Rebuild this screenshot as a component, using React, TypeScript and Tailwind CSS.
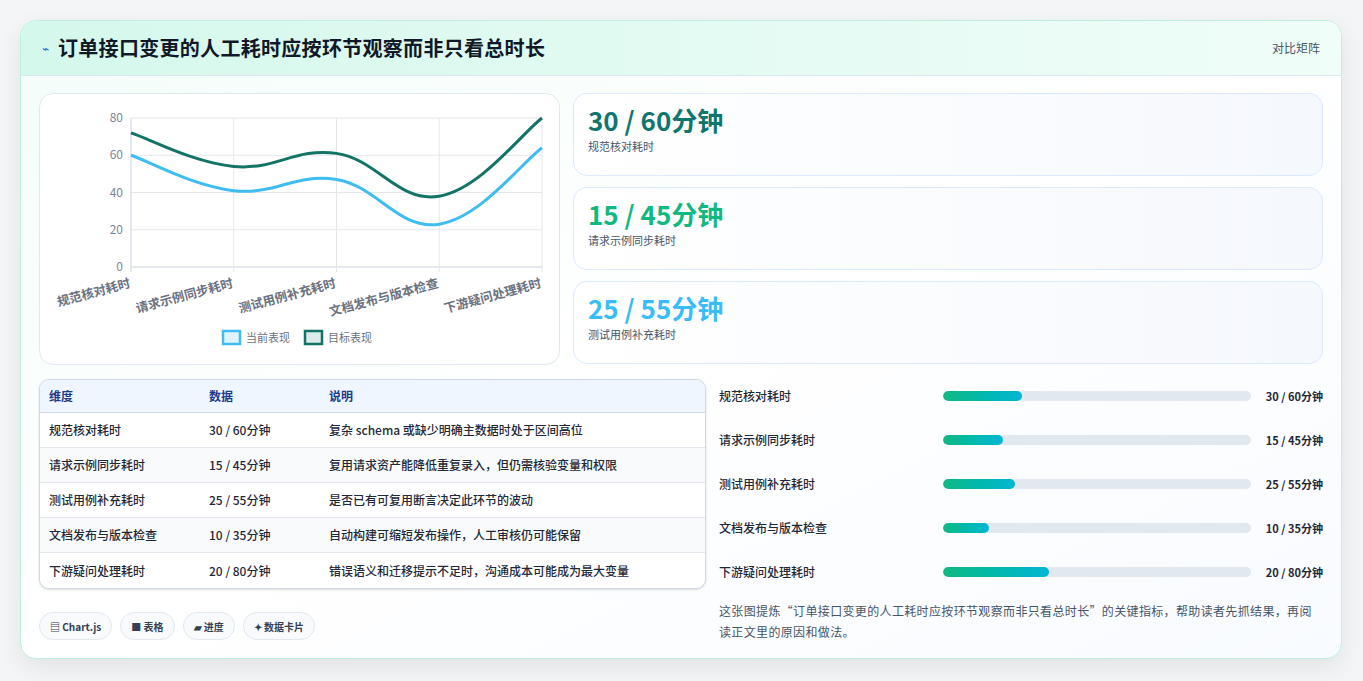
import React from "react";

const F = { fontFamily: '"Noto Sans CJK SC","Noto Sans",sans-serif' };
const labels = ["规范核对耗时", "请求示例同步耗时", "测试用例补充耗时", "文档发布与版本检查", "下游疑问处理耗时"];
const cur = [60, 41, 47, 23, 64];
const tgt = [72, 54, 61, 38, 80];
const X0 = 130, X1 = 541, Y0 = 264, Y1 = 115;
const xs = labels.map((_, i) => X0 + ((X1 - X0) * i) / 4);
const yv = (v: number) => Y0 - ((Y0 - Y1) * v) / 80;

function path(d: number[]) {
  const p = d.map((v, i) => [xs[i] - 39, yv(v) - 93]);
  let s = `M${p[0][0]},${p[0][1]}`;
  const t = 0.4;
  for (let i = 0; i < p.length - 1; i++) {
    const p0 = p[i - 1] || p[i], p1 = p[i], p2 = p[i + 1], p3 = p[i + 2] || p2;
    const c1 = [p1[0] + (p2[0] - p0[0]) * t / 2, p1[1] + (p2[1] - p0[1]) * t / 2];
    const c2 = [p2[0] - (p3[0] - p1[0]) * t / 2, p2[1] - (p3[1] - p1[1]) * t / 2];
    s += ` C${c1[0]},${c1[1]} ${c2[0]},${c2[1]} ${p2[0]},${p2[1]}`;
  }
  return s;
}

function Chart() {
  return (
    <svg width="519" height="269" className="block">
      {[0, 20, 40, 60, 80].map((v) => (
        <g key={v}>
          <line x1={X0 - 39} x2={X1 - 39} y1={yv(v) - 93} y2={yv(v) - 93} stroke={v === 0 ? "#cbd5e1" : "#e5e7eb"} />
          <text x={X0 - 47} y={yv(v) - 89} textAnchor="end" fontSize="12" fill="#7a8599" style={F}>{v}</text>
        </g>
      ))}
      {xs.map((x, i) => (
        <g key={i}>
          <line x1={x - 39} x2={x - 39} y1={Y1 - 93} y2={Y0 - 88} stroke={i === 0 ? "#cbd5e1" : "#e5e7eb"} />
          <text x={x - 39} y={Y0 - 93 + 20} textAnchor="end" fontSize="12.5" fontWeight="600" fill="#6b7280" transform={`rotate(-15 ${x - 39} ${Y0 - 93 + 20})`} style={F}>{labels[i]}</text>
        </g>
      ))}
      <path d={path(cur)} fill="none" stroke="#3fbdf0" strokeWidth="3" />
      <path d={path(tgt)} fill="none" stroke="#137366" strokeWidth="3" />
      <rect x="183" y="235" width="17" height="13" fill="#e0f4fd" stroke="#3fbdf0" strokeWidth="2.5" />
      <text x="206" y="246" fontSize="11" fill="#6b7280" style={F}>当前表现</text>
      <rect x="265" y="235" width="17" height="13" fill="#dcecea" stroke="#137366" strokeWidth="2.5" />
      <text x="288" y="246" fontSize="11" fill="#6b7280" style={F}>目标表现</text>
    </svg>
  );
}

const rows = [
  ["规范核对耗时", "30 / 60分钟", "复杂 schema 或缺少明确主数据时处于区间高位", 25.7],
  ["请求示例同步耗时", "15 / 45分钟", "复用请求资产能降低重复录入，但仍需核验变量和权限", 19.5],
  ["测试用例补充耗时", "25 / 55分钟", "是否已有可复用断言决定此环节的波动", 23.5],
  ["文档发布与版本检查", "10 / 35分钟", "自动构建可缩短发布操作，人工审核仍可能保留", 15],
  ["下游疑问处理耗时", "20 / 80分钟", "错误语义和迁移提示不足时，沟通成本可能成为最大变量", 34.5],
] as const;

const stats = [
  ["30 / 60分钟", "规范核对耗时", "text-[#0f766e]"],
  ["15 / 45分钟", "请求示例同步耗时", "text-[#10b981]"],
  ["25 / 55分钟", "测试用例补充耗时", "text-[#38bdf8]"],
];

export default function App() {
  return (
    <div style={F} className="w-[1363px] h-[681px] bg-[#f4f5f7] pt-[20px] pl-[20px]">
      <div className="w-[1322px] h-[639px] rounded-[16px] border border-[#bfeee0] bg-gradient-to-br from-[#f3fdf9] via-white to-[#f8fbff] shadow-[0_8px_24px_rgba(0,0,0,0.08)] overflow-hidden">
        <div className="h-[55px] flex items-center justify-between px-[21px] bg-gradient-to-r from-[#d5f8ec] to-[#f0fdf8] border-b border-[#dbe9ef]">
          <div className="flex items-center gap-[9px]">
            <span className="text-[#2563eb] text-[12px]">⌁</span>
            <span className="text-[20px] font-bold text-[#111827] tracking-[0.3px]">订单接口变更的人工耗时应按环节观察而非只看总时长</span>
          </div>
          <span className="text-[12px] text-[#475569]">对比矩阵</span>
        </div>
        <div className="px-[18px] pt-[17px]">
          <div className="flex gap-[13px]">
            <div className="w-[521px] h-[272px] rounded-[14px] border border-[#e2e8f0] bg-white pt-[2px]">
              <Chart />
            </div>
            <div className="flex-1 flex flex-col gap-[11px]">
              {stats.map(([v, l, c]) => (
                <div key={l} className="h-[83px] rounded-[14px] border border-[#dbeafe] bg-gradient-to-r from-white to-[#f5f8fd] px-[14px] pt-[9px]">
                  <div className={`text-[26px] font-bold leading-[33px] ${c}`}>{v}</div>
                  <div className="text-[11px] text-[#475569] mt-[2px]">{l}</div>
                </div>
              ))}
            </div>
          </div>
          <div className="flex gap-[13px] mt-[14px]">
            <div className="w-[667px]">
              <div className="rounded-[10px] border border-[#cfd8e3] overflow-hidden bg-white shadow-sm">
                <div className="flex h-[33px] items-center bg-[#eff6ff] border-b border-[#cfd8e3] text-[12px] font-semibold text-[#1e3a8a]">
                  <div className="w-[169px] pl-[9px]">维度</div>
                  <div className="w-[120px]">数据</div>
                  <div>说明</div>
                </div>
                {rows.map((r, i) => (
                  <div key={i} className={`flex h-[35px] items-center text-[12px] font-medium text-[#1f2937] ${i < 4 ? "border-b border-[#e5e9ef]" : ""} ${i % 2 ? "bg-[#f8fafc]" : "bg-white"}`}>
                    <div className="w-[169px] pl-[9px]">{r[0]}</div>
                    <div className="w-[120px]">{r[1]}</div>
                    <div>{r[2]}</div>
                  </div>
                ))}
              </div>
              <div className="flex gap-[8px] mt-[23px]">
                {["▤ Chart.js", "■ 表格", "▰ 进度", "✦ 数据卡片"].map((t) => (
                  <span key={t} className="h-[28px] px-[10px] flex items-center rounded-full border border-[#e2e8f0] bg-[#f8fafc] text-[10px] font-semibold text-[#334155]">{t}</span>
                ))}
              </div>
            </div>
            <div className="flex-1">
              <div className="flex flex-col gap-[22px] pt-[6px]">
                {rows.map((r, i) => (
                  <div key={i} className="flex items-center h-[22px]">
                    <div className="w-[224px] text-[12px] font-medium text-[#1f2937]">{r[0]}</div>
                    <div className="w-[308px] h-[10px] rounded-full bg-[#e2e8f0] overflow-hidden">
                      <div className="h-full rounded-full bg-gradient-to-r from-[#10b981] to-[#06b6d4]" style={{ width: `${r[3]}%` }} />
                    </div>
                    <div className="flex-1 text-right text-[11px] font-bold text-[#1f2937]">{r[1]}</div>
                  </div>
                ))}
              </div>
              <p className="mt-[17px] pr-[4px] text-[12px] leading-[21px] tracking-[0.35px] text-[#475569]">这张图提炼“订单接口变更的人工耗时应按环节观察而非只看总时长”的关键指标，帮助读者先抓结果，再阅读正文里的原因和做法。</p>
            </div>
          </div>
        </div>
      </div>
    </div>
  );
}
